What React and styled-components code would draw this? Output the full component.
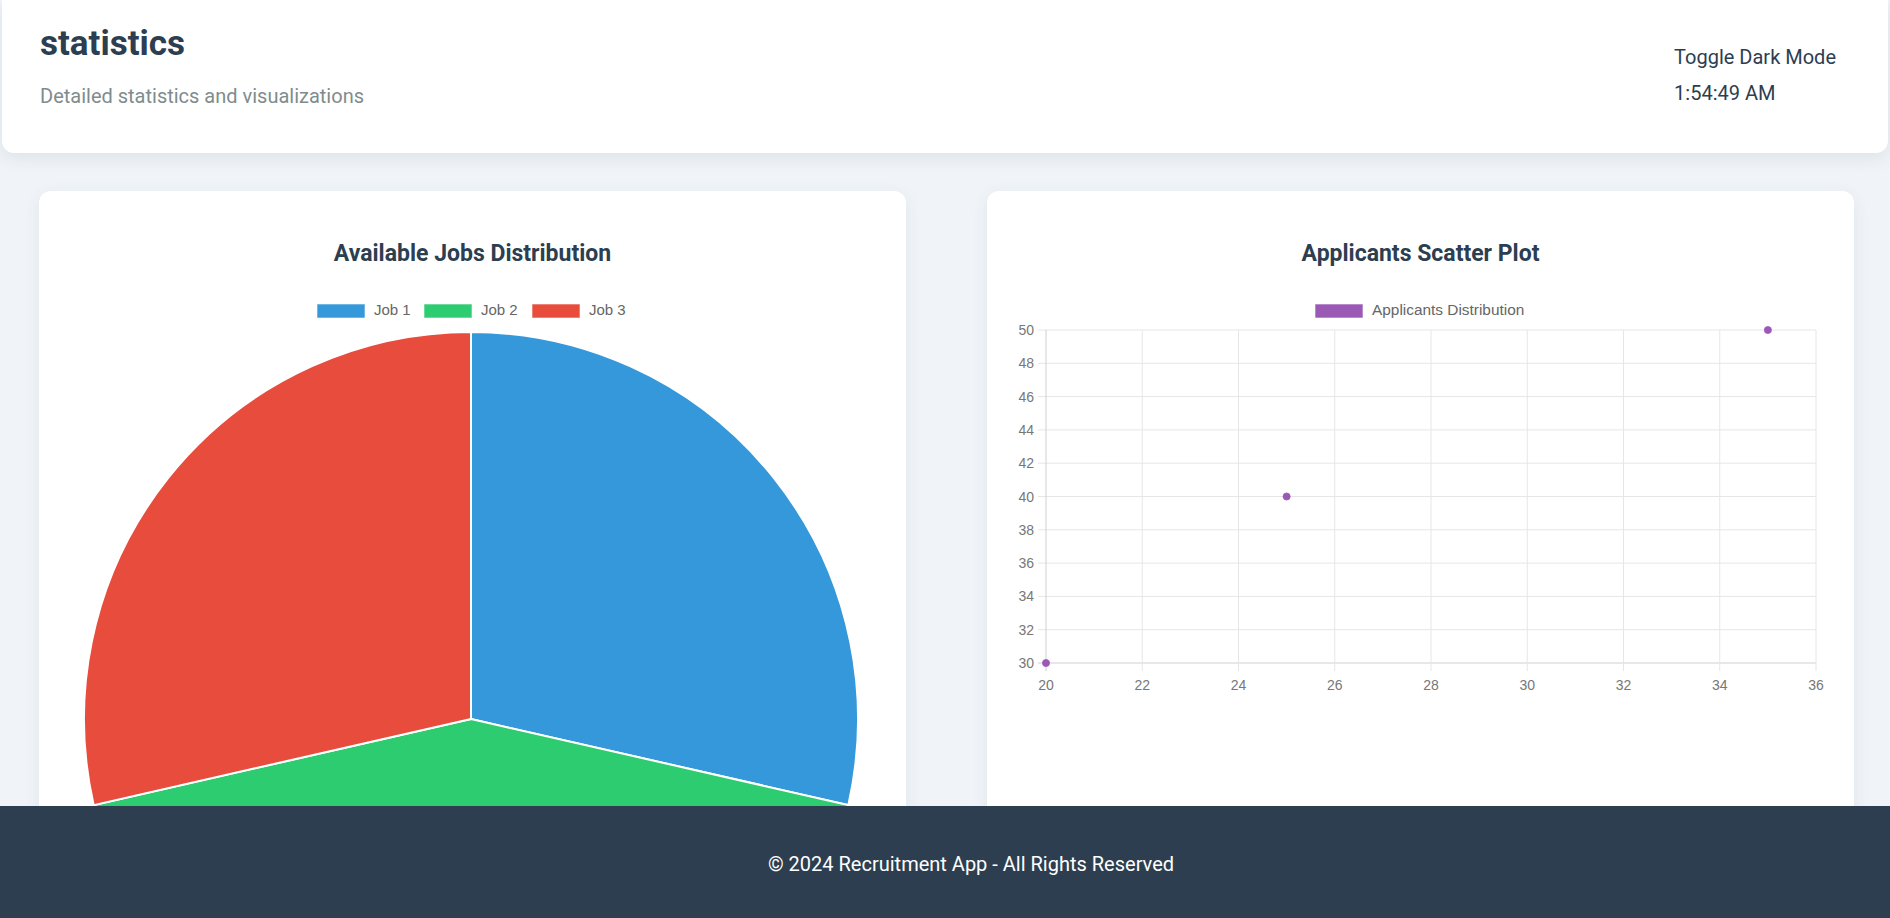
import React from "react";
import styled, { createGlobalStyle } from "styled-components";

const jobs = [
  { label: "Job 1", value: 10, color: "#3498db" },
  { label: "Job 2", value: 15, color: "#2ecc71" },
  { label: "Job 3", value: 10, color: "#e74c3c" },
];

const applicants = [
  { x: 20, y: 30 },
  { x: 25, y: 40 },
  { x: 35, y: 50 },
];

// scatter plot area, in svg units
const plot = { left: 27, right: 797, top: 43, bottom: 376 };
const xMin = 20;
const xMax = 36;
const yMin = 30;
const yMax = 50;
const px = (v) => plot.left + ((v - xMin) / (xMax - xMin)) * (plot.right - plot.left);
const py = (v) => plot.bottom - ((v - yMin) / (yMax - yMin)) * (plot.bottom - plot.top);

const range = (from, to, step) => {
  const out = [];
  for (let v = from; v <= to; v += step) out.push(v);
  return out;
};

function slicePath(cx, cy, r, start, end) {
  const x1 = cx + r * Math.cos(start);
  const y1 = cy + r * Math.sin(start);
  const x2 = cx + r * Math.cos(end);
  const y2 = cy + r * Math.sin(end);
  const large = end - start > Math.PI ? 1 : 0;
  return `M ${cx} ${cy} L ${x1} ${y1} A ${r} ${r} 0 ${large} 1 ${x2} ${y2} Z`;
}

export default function App() {
  const total = jobs.reduce((s, j) => s + j.value, 0);
  let angle = -Math.PI / 2;
  const slices = jobs.map((j) => {
    const start = angle;
    angle += (j.value / total) * Math.PI * 2;
    return { ...j, d: slicePath(400, 432, 387, start, angle) };
  });

  const legendX = [246, 353, 461];

  return (
    <>
      <GlobalStyle />
      <Shell>
        <Header>
          <div>
            <PageTitle>statistics</PageTitle>
            <Subtitle>Detailed statistics and visualizations</Subtitle>
          </div>
          <HeaderSide>
            <ModeButton type="button">Toggle Dark Mode</ModeButton>
            <Clock>1:54:49 AM</Clock>
          </HeaderSide>
        </Header>

        <Main>
          <ChartGrid>
            <Card>
              <CardTitle>Available Jobs Distribution</CardTitle>
              <ChartSvg viewBox="0 0 803 860">
                {jobs.map((j, i) => (
                  <g key={j.label}>
                    <rect
                      x={legendX[i]}
                      y={17}
                      width={48}
                      height={14}
                      fill={j.color}
                      stroke="rgba(255,255,255,0.6)"
                      strokeWidth="1"
                    />
                    <LegendText x={legendX[i] + 57} y={28}>
                      {j.label}
                    </LegendText>
                  </g>
                ))}
                {slices.map((s) => (
                  <path key={s.label} d={s.d} fill={s.color} stroke="#fff" strokeWidth="2" />
                ))}
              </ChartSvg>
            </Card>

            <Card>
              <CardTitle>Applicants Scatter Plot</CardTitle>
              <ChartSvg viewBox="0 0 803 860">
                <rect
                  x={296}
                  y={17}
                  width={48}
                  height={14}
                  fill="#9b59b6"
                  stroke="rgba(255,255,255,0.6)"
                  strokeWidth="1"
                />
                <LegendText x={353} y={28} $wide>
                  Applicants Distribution
                </LegendText>

                {range(yMin, yMax, 2).map((v) => (
                  <g key={"y" + v}>
                    <line
                      x1={plot.left - 8}
                      x2={plot.right}
                      y1={py(v)}
                      y2={py(v)}
                      stroke={v === yMin ? "#d0d0d0" : "#e6e6e6"}
                      strokeWidth="1"
                    />
                    <TickText x={plot.left - 12} y={py(v) + 5} textAnchor="end">
                      {v}
                    </TickText>
                  </g>
                ))}
                {range(xMin, xMax, 2).map((v) => (
                  <g key={"x" + v}>
                    <line
                      x1={px(v)}
                      x2={px(v)}
                      y1={plot.top}
                      y2={plot.bottom + 8}
                      stroke={v === xMin ? "#d0d0d0" : "#e6e6e6"}
                      strokeWidth="1"
                    />
                    <TickText x={px(v)} y={plot.bottom + 27} textAnchor="middle">
                      {v}
                    </TickText>
                  </g>
                ))}
                {applicants.map((p) => (
                  <circle
                    key={p.x}
                    cx={px(p.x)}
                    cy={py(p.y)}
                    r="3.6"
                    fill="#9b59b6"
                    stroke="rgba(155,89,182,0.7)"
                  />
                ))}
              </ChartSvg>
            </Card>
          </ChartGrid>
        </Main>

        <Footer>© 2024 Recruitment App - All Rights Reserved</Footer>
      </Shell>
    </>
  );
}

const GlobalStyle = createGlobalStyle`
  html, body {
    margin: 0;
    padding: 0;
    height: 100%;
  }
  body {
    font-family: Roboto, "Noto Sans", sans-serif;
    background: #f0f4f8;
    overflow: hidden;
  }
`;

const Shell = styled.div`
  height: 100vh;
  display: flex;
  flex-direction: column;
  overflow: hidden;
  background: #f0f4f8;
`;

const Header = styled.header`
  position: relative;
  z-index: 1;
  flex-shrink: 0;
  margin: 0 2px;
  height: 153px;
  box-sizing: border-box;
  padding: 23px 52px 0 38px;
  display: flex;
  justify-content: space-between;
  align-items: flex-start;
  background: #ffffff;
  border-radius: 0 0 12px 12px;
  box-shadow: 0 4px 18px rgba(44, 62, 80, 0.1);
`;

const PageTitle = styled.h1`
  margin: 0;
  font-size: 35px;
  line-height: 1.2;
  font-weight: 700;
  color: #2c3e50;
`;

const Subtitle = styled.p`
  margin: 16px 0 0;
  font-size: 20px;
  line-height: 1.5;
  color: #7f8c8d;
`;

const HeaderSide = styled.div`
  padding-top: 22px;
  display: flex;
  flex-direction: column;
  align-items: flex-start;
  gap: 12px;
`;

const ModeButton = styled.button`
  padding: 0;
  border: none;
  background: transparent;
  font-family: Roboto, "Noto Sans", sans-serif;
  font-size: 20px;
  line-height: 24px;
  color: #2c3e50;
  cursor: pointer;
`;

const Clock = styled.div`
  font-size: 20px;
  line-height: 24px;
  color: #2c3e50;
`;

const Main = styled.main`
  flex: 1;
  min-height: 0;
  overflow: hidden;
`;

const ChartGrid = styled.div`
  display: grid;
  grid-template-columns: 1fr 1fr;
  gap: 81px;
  padding: 38px 36px 0 39px;
`;

const Card = styled.section`
  background: #ffffff;
  border-radius: 12px;
  padding: 49px 32px 32px;
  box-shadow: 0 4px 16px rgba(44, 62, 80, 0.08);
`;

const CardTitle = styled.h3`
  margin: 0 0 19px;
  text-align: center;
  font-size: 23px;
  line-height: 1.2;
  font-weight: 700;
  color: #2c3e50;
`;

const ChartSvg = styled.svg`
  display: block;
  width: 100%;
  height: auto;
  overflow: visible;
`;

const LegendText = styled.text`
  font-family: "Liberation Sans", Arial, sans-serif;
  font-size: ${(p) => (p.$wide ? "15.4px" : "15px")};
  fill: #666666;
`;

const TickText = styled.text`
  font-family: "Liberation Sans", Arial, sans-serif;
  font-size: 14px;
  fill: #777777;
`;

const Footer = styled.footer`
  flex-shrink: 0;
  height: 112px;
  box-sizing: border-box;
  padding: 4px 0 0 52px;
  display: flex;
  align-items: center;
  justify-content: center;
  background: #2c3e50;
  color: #ffffff;
  font-size: 20px;
`;
